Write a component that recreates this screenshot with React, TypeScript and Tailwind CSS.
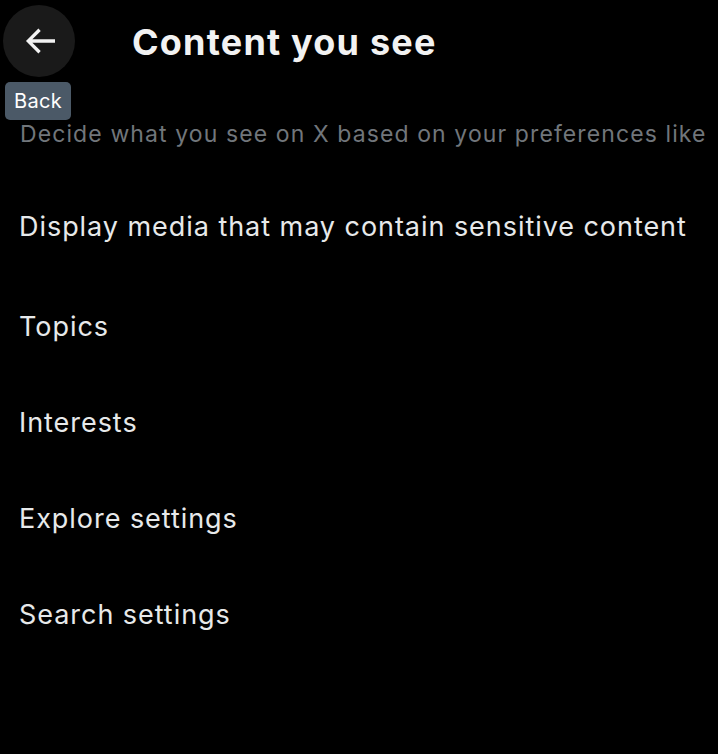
import React from "react";

const items = [
  "Display media that may contain sensitive content",
  "Topics",
  "Interests",
  "Explore settings",
  "Search settings",
];

export default function App() {
  return (
    <div
      className="w-[718px] h-[754px] bg-black text-[#e7e9ea] overflow-hidden"
      style={{ fontFamily: "Inter, 'Liberation Sans', sans-serif" }}
    >
      {/* Header */}
      <div className="relative flex items-center h-[80px]">
        <div className="ml-[3px] mt-[1px] w-[72px] h-[72px] rounded-full bg-[#1a1a1a] flex items-center justify-center">
          <svg width="40" height="40" viewBox="0 0 24 24" fill="#f2f2f2" className="ml-[1px] mt-[1px]">
            <path d="M7.414 13l5.043 5.04-1.414 1.42L3.586 12l7.457-7.46 1.414 1.42L7.414 11H21v2H7.414z" />
          </svg>
        </div>
        <h1 className="ml-[57px] mt-[4px] text-[36px] font-bold text-[#f2f2f2] tracking-[1.2px]">Content you see</h1>
        <div className="absolute left-[5px] top-[82px] px-[9px] h-[38px] flex items-center rounded-[5px] bg-[#4b5967] text-white text-[20px] tracking-[0.3px]">
          Back
        </div>
      </div>

      {/* Subtitle */}
      <div className="mt-[38px] pl-[20px] pr-0 w-[740px] h-[32px] overflow-hidden text-[23px] leading-[32px] tracking-[1.1px] text-[#71767b]">
        Decide what you see on X based on your preferences like Topics and interests.
      </div>

      {/* Items */}
      <div className="mt-[29px] flex flex-col">
        {items.map((t, i) => (
          <div
            key={t}
            className={`${i === 0 ? "h-[100px] pb-[4px]" : "h-[96px]"} flex items-center pl-[19px] text-[27px] tracking-[0.95px] text-[#e7e9ea] whitespace-nowrap`}
          >
            {t}
          </div>
        ))}
      </div>
    </div>
  );
}
